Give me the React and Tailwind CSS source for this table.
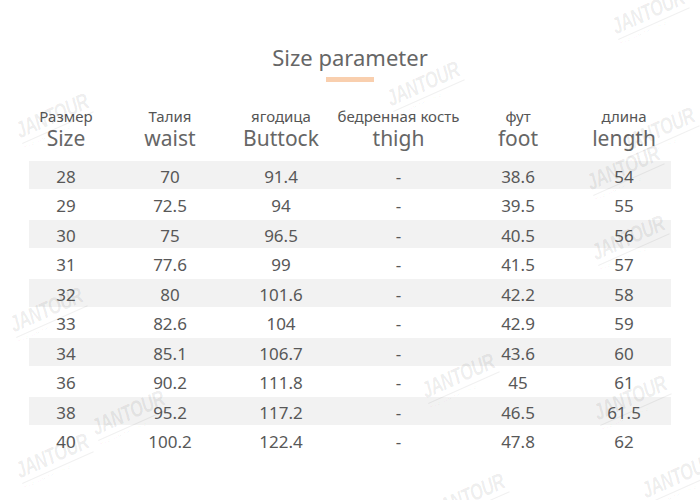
import React from "react";

const ROWS = [
  ["28", "70", "91.4", "-", "38.6", "54"],
  ["29", "72.5", "94", "-", "39.5", "55"],
  ["30", "75", "96.5", "-", "40.5", "56"],
  ["31", "77.6", "99", "-", "41.5", "57"],
  ["32", "80", "101.6", "-", "42.2", "58"],
  ["33", "82.6", "104", "-", "42.9", "59"],
  ["34", "85.1", "106.7", "-", "43.6", "60"],
  ["36", "90.2", "111.8", "-", "45", "61"],
  ["38", "95.2", "117.2", "-", "46.5", "61.5"],
  ["40", "100.2", "122.4", "-", "47.8", "62"],
];

const HEADERS = [
  ["Размер", "Size"],
  ["Талия", "waist"],
  ["ягодица", "Buttock"],
  ["бедренная кость", "thigh"],
  ["фут", "foot"],
  ["длина", "length"],
];

// per-column nudges so the text centres line up with the picture
const COL_PAD = ["pr-[14px]", "", "", "", "pl-[8px]", "pl-[5px]"];

// watermark spots, written out in full so tailwind picks them up
const MARKS = [
  "left-[610px] top-[-6px]",
  "left-[14px] top-[98px]",
  "left-[385px] top-[66px]",
  "left-[620px] top-[112px]",
  "left-[585px] top-[150px]",
  "left-[590px] top-[220px]",
  "left-[8px] top-[292px]",
  "left-[90px] top-[395px]",
  "left-[14px] top-[438px]",
  "left-[420px] top-[358px]",
  "left-[592px] top-[380px]",
  "left-[640px] top-[458px]",
  "left-[430px] top-[478px]",
];

function Watermark({ pos }) {
  return (
    <div className={`pointer-events-none absolute ${pos} rotate-[-24deg]`}>
      <div className="origin-left scale-x-[0.72] font-['Liberation_Sans',sans-serif] text-[23px] font-bold italic leading-[22px] tracking-tight text-black/[0.08]">
        JANTOUR
      </div>
      <div className="mt-[2px] h-px w-[78px] bg-black/[0.06]" />
      <div className="mt-[1px] font-['Liberation_Sans',sans-serif] text-[4px] leading-[5px] text-black/[0.08]">
        Brand quality · fashion trend
      </div>
    </div>
  );
}

export default function App() {
  return (
    <div className="relative h-[500px] w-[700px] overflow-hidden bg-white font-['Noto_Sans',sans-serif]">
      <div className="flex flex-col items-center pt-[42px]">
        <h1 className="text-[22px] leading-[30px] text-[#666]">Size parameter</h1>
        <div className="mt-[5px] h-[5px] w-[48px] bg-[#f9cfae]" />
      </div>

      <div className="mx-[29px] mt-[25px] grid grid-cols-[88px_106px_116px_119px_112px_103px]">
        {HEADERS.map(([ru, en], i) => (
          <div key={en} className={`flex flex-col items-center ${COL_PAD[i]}`}>
            <span className="whitespace-nowrap text-[15px] leading-[19px] text-[#555]">{ru}</span>
            <span className="text-[21px] leading-[24px] text-[#666]">{en}</span>
          </div>
        ))}
      </div>

      <div className="mx-[29px] mt-[11px]">
        {ROWS.map((row, r) => (
          <div
            key={row[0]}
            className={[
              "grid grid-cols-[88px_106px_116px_119px_112px_103px] items-center pt-[3px] text-[17px] text-[#585858]",
              r % 2 === 0 ? "h-[28px] bg-[#f2f2f2]" : "h-[31px] bg-white",
            ].join(" ")}
          >
            {row.map((v, i) => (
              <div key={i} className={`text-center ${COL_PAD[i]}`}>
                {v}
              </div>
            ))}
          </div>
        ))}
      </div>

      {MARKS.map((p) => (
        <Watermark key={p} pos={p} />
      ))}
    </div>
  );
}
